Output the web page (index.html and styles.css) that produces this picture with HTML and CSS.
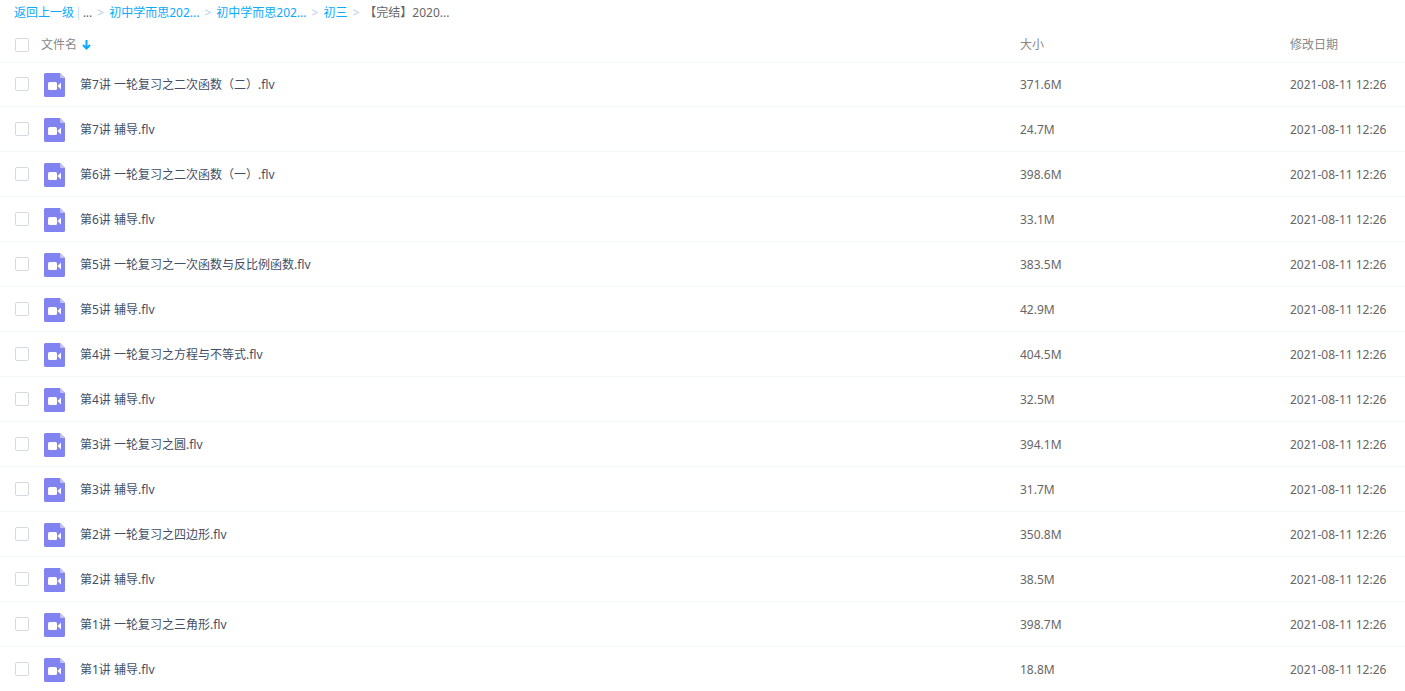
FILE: index.html
```html
<!DOCTYPE html>
<html lang="zh-CN">
<head>
    <meta charset="UTF-8">
    <title>文件列表</title>
    <link rel="stylesheet" href="styles.css">
</head>
<body>
    <svg class="symbols" width="0" height="0">
        <symbol id="video" viewBox="0 0 21 24">
            <path fill="#8183f1" d="M1.5 0H16l5 5v17.5a1.5 1.5 0 0 1-1.5 1.5h-18A1.5 1.5 0 0 1 0 22.5v-21A1.5 1.5 0 0 1 1.5 0z"/>
            <path fill="#c0c1f8" d="M16 0l5 5h-4a1 1 0 0 1-1-1z"/>
            <rect fill="#fff" x="4" y="9" width="9" height="8" rx="1.5"/>
            <path fill="#fff" d="M13.500 13l3.500-3.500v7z"/>
        </symbol>
    </svg>
    <nav class="path">
        <a href="#">返回上一级</a>
        <span class="line">|</span>
        <span>...</span>
        <span class="gt">&gt;</span>
        <a href="#">初中学而思202...</a>
        <span class="gt">&gt;</span>
        <a href="#">初中学而思202...</a>
        <span class="gt">&gt;</span>
        <a href="#">初三</a>
        <span class="gt">&gt;</span>
        <span>【完结】2020...</span>
    </nav>
    <table class="list">
        <colgroup>
            <col class="col-check">
            <col class="col-icon">
            <col>
            <col class="col-size">
            <col class="col-date">
        </colgroup>
        <thead>
            <tr>
                <th class="check"><input type="checkbox" aria-label="全选"></th>
                <th colspan="2">文件名<svg class="sort" width="9" height="10" viewBox="0 0 9 10"><path d="M4.5 0v8M1 5l3.5 3.5L8 5" fill="none" stroke="#09aaff" stroke-width="2"/></svg></th>
                <th>大小</th>
                <th>修改日期</th>
            </tr>
        </thead>
        <tbody>
            <tr>
                <td class="check"><input type="checkbox" id="f1"></td>
                <td class="icon"><svg width="21" height="24"><use href="#video"/></svg></td>
                <td class="file"><label for="f1">第7讲 一轮复习之二次函数（二）.flv</label></td>
                <td>371.6M</td>
                <td>2021-08-11 12:26</td>
            </tr>
            <tr>
                <td class="check"><input type="checkbox" id="f2"></td>
                <td class="icon"><svg width="21" height="24"><use href="#video"/></svg></td>
                <td class="file"><label for="f2">第7讲 辅导.flv</label></td>
                <td>24.7M</td>
                <td>2021-08-11 12:26</td>
            </tr>
            <tr>
                <td class="check"><input type="checkbox" id="f3"></td>
                <td class="icon"><svg width="21" height="24"><use href="#video"/></svg></td>
                <td class="file"><label for="f3">第6讲 一轮复习之二次函数（一）.flv</label></td>
                <td>398.6M</td>
                <td>2021-08-11 12:26</td>
            </tr>
            <tr>
                <td class="check"><input type="checkbox" id="f4"></td>
                <td class="icon"><svg width="21" height="24"><use href="#video"/></svg></td>
                <td class="file"><label for="f4">第6讲 辅导.flv</label></td>
                <td>33.1M</td>
                <td>2021-08-11 12:26</td>
            </tr>
            <tr>
                <td class="check"><input type="checkbox" id="f5"></td>
                <td class="icon"><svg width="21" height="24"><use href="#video"/></svg></td>
                <td class="file"><label for="f5">第5讲 一轮复习之一次函数与反比例函数.flv</label></td>
                <td>383.5M</td>
                <td>2021-08-11 12:26</td>
            </tr>
            <tr>
                <td class="check"><input type="checkbox" id="f6"></td>
                <td class="icon"><svg width="21" height="24"><use href="#video"/></svg></td>
                <td class="file"><label for="f6">第5讲 辅导.flv</label></td>
                <td>42.9M</td>
                <td>2021-08-11 12:26</td>
            </tr>
            <tr>
                <td class="check"><input type="checkbox" id="f7"></td>
                <td class="icon"><svg width="21" height="24"><use href="#video"/></svg></td>
                <td class="file"><label for="f7">第4讲 一轮复习之方程与不等式.flv</label></td>
                <td>404.5M</td>
                <td>2021-08-11 12:26</td>
            </tr>
            <tr>
                <td class="check"><input type="checkbox" id="f8"></td>
                <td class="icon"><svg width="21" height="24"><use href="#video"/></svg></td>
                <td class="file"><label for="f8">第4讲 辅导.flv</label></td>
                <td>32.5M</td>
                <td>2021-08-11 12:26</td>
            </tr>
            <tr>
                <td class="check"><input type="checkbox" id="f9"></td>
                <td class="icon"><svg width="21" height="24"><use href="#video"/></svg></td>
                <td class="file"><label for="f9">第3讲 一轮复习之圆.flv</label></td>
                <td>394.1M</td>
                <td>2021-08-11 12:26</td>
            </tr>
            <tr>
                <td class="check"><input type="checkbox" id="f10"></td>
                <td class="icon"><svg width="21" height="24"><use href="#video"/></svg></td>
                <td class="file"><label for="f10">第3讲 辅导.flv</label></td>
                <td>31.7M</td>
                <td>2021-08-11 12:26</td>
            </tr>
            <tr>
                <td class="check"><input type="checkbox" id="f11"></td>
                <td class="icon"><svg width="21" height="24"><use href="#video"/></svg></td>
                <td class="file"><label for="f11">第2讲 一轮复习之四边形.flv</label></td>
                <td>350.8M</td>
                <td>2021-08-11 12:26</td>
            </tr>
            <tr>
                <td class="check"><input type="checkbox" id="f12"></td>
                <td class="icon"><svg width="21" height="24"><use href="#video"/></svg></td>
                <td class="file"><label for="f12">第2讲 辅导.flv</label></td>
                <td>38.5M</td>
                <td>2021-08-11 12:26</td>
            </tr>
            <tr>
                <td class="check"><input type="checkbox" id="f13"></td>
                <td class="icon"><svg width="21" height="24"><use href="#video"/></svg></td>
                <td class="file"><label for="f13">第1讲 一轮复习之三角形.flv</label></td>
                <td>398.7M</td>
                <td>2021-08-11 12:26</td>
            </tr>
            <tr>
                <td class="check"><input type="checkbox" id="f14"></td>
                <td class="icon"><svg width="21" height="24"><use href="#video"/></svg></td>
                <td class="file"><label for="f14">第1讲 辅导.flv</label></td>
                <td>18.8M</td>
                <td>2021-08-11 12:26</td>
            </tr>
        </tbody>
    </table>
</body>
</html>
```
FILE: styles.css
```css
*{
    padding:0;
    margin:0;
    box-sizing:border-box;
}
body{
    background:#fff;
    color:#666;
    font:12px/18px "Noto Sans","Noto Sans CJK SC",sans-serif;
}
a{
    color:#09aaff;
    text-decoration:none;
}
.symbols{
    position:absolute;
}
.path{
    display:flex;
    height:26px;
    padding-left:14px;
    line-height:26px;
    white-space:nowrap;
}
.path .line{
    margin:0 1px;
    color:#c4dbfe;
}
.path .gt{
    margin:0 5px;
    color:#b4cdf2;
}
.list{
    width:100%;
    table-layout:fixed;
    border-collapse:separate;
    border-spacing:0;
}
.col-check{
    width:41px;
}
.col-icon{
    width:39px;
}
.col-size{
    width:270px;
}
.col-date{
    width:115px;
}
.list th{
    height:36px;
    padding-top:2px;
    color:#888;
    font-weight:normal;
    text-align:left;
}
.list td{
    height:45px;
    padding-top:2px;
    border-bottom:1px solid #f2f6fd;
}
.list tbody tr:first-child td{
    box-shadow:inset 0 1px #f2f6fd;
}
.list .check{
    padding-left:15px;
}
.list td.check{
    padding-top:0;
}
.list input{
    display:block;
    width:14px;
    height:14px;
    appearance:none;
    background:#fff;
    border:1px solid #d5dae2;
    border-radius:2px;
}
.list input:checked{
    background:#09aaff;
    border-color:#09aaff;
}
.sort{
    margin-left:5px;
    vertical-align:-1px;
}
.list .icon{
    padding-left:3px;
}
.icon svg{
    display:block;
}
.file{
    color:#424e67;
}
```
